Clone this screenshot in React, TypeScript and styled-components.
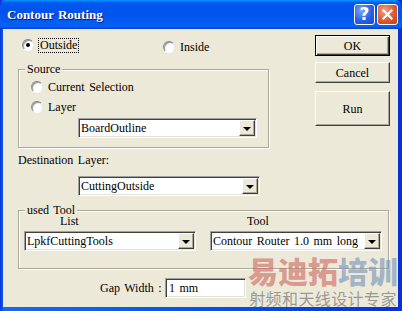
import styled, { createGlobalStyle } from "styled-components";

const Global = createGlobalStyle`
  html, body { margin: 0; padding: 0; background: #fff; }
  body { font-family: "Liberation Serif", serif; font-size: 12px; }
  * { box-sizing: border-box; }
`

const Window = styled.div`
  position: relative;
  width: 402px;
  height: 311px;
  display: flex;
  flex-direction: column;
  background: linear-gradient(to right, #0831d9 0%, #166aee 1%, #0055ea 50%, #0831d9 100%);
  font-family: "Liberation Serif", serif;
  font-size: 12px;
  word-spacing: 1.5px;
  color: #000;
  overflow: hidden;
`
const TitleBar = styled.div`
  height: 29px;
  display: flex;
  align-items: center;
  padding: 0 4px 0 7px;
  background: linear-gradient(to bottom, #0a97ff 0%, #0058ee 10%, #0052ea 45%, #0460f5 85%, #0a5ff0 92%, #003dd7 100%);
  border-radius: 7px 7px 0 0;
`
const Title = styled.div`
  flex: 1;
  color: #fff;
  font-weight: bold;
  font-size: 13px;
  word-spacing: 1px;
  text-shadow: 1px 1px #0a1883;
  padding-top: 1px;
`
const CapButton = styled.div<{ $close?: boolean }>`
  width: 21px;
  height: 21px;
  margin-left: 2px;
  border: 1px solid #fff;
  border-radius: 3px;
  display: flex;
  align-items: center;
  justify-content: center;
  background: ${p => p.$close
    ? "radial-gradient(circle at 35% 30%, #f2a07e 0%, #e0582c 55%, #c43c18 100%)"
    : "radial-gradient(circle at 35% 30%, #7ea6f8 0%, #2a62e6 55%, #1c46c8 100%)"};
  color: #fff;
  font-family: "DejaVu Sans", sans-serif;
  font-weight: bold;
  font-size: 17px;
  line-height: 1;
`
const Body = styled.div`
  position: relative;
  flex: 1;
  margin: 0 4px 4px 3px;
  background: #ece9d8;
  padding: 6px 9px 0 15px;
  display: flex;
  flex-direction: column;
`
const TopRow = styled.div`
  display: flex;
  justify-content: space-between;
`
const LeftCol = styled.div`
  width: 251px;
  display: flex;
  flex-direction: column;
`
const ModeRow = styled.div`
  height: 34px;
  display: grid;
  grid-template-columns: 145px 1fr;
  align-items: start;
  padding-top: 2px;
`
const RadioLabel = styled.div<{ $offset?: number; $left?: number }>`
  display: flex;
  align-items: center;
  gap: 5px;
  height: 16px;
  margin-top: ${p => p.$offset || 0}px;
  margin-left: ${p => p.$left || 0}px;
`
const RadioDot = styled.span<{ $on?: boolean }>`
  width: 12px;
  height: 12px;
  flex: none;
  border-radius: 50%;
  border: 1px solid;
  border-color: #808080 #e8e8e8 #ffffff #909090;
  background: radial-gradient(circle at 60% 65%, #ffffff 0%, #ffffff 45%, #dcdad0 100%);
  box-shadow: inset 1px 1px 0 #9a9a9a;
  display: flex;
  align-items: center;
  justify-content: center;
  &::after {
    content: "";
    width: 4px;
    height: 4px;
    border-radius: 50%;
    background: #000;
    display: ${p => (p.$on ? "block" : "none")};
  }
`
const Focus = styled.span`
  border: 1px dotted #000;
  margin-left: -1px;
  padding: 0 1px;
  line-height: 13px;
`
const Group = styled.div<{ $h: number }>`
  position: relative;
  height: ${p => p.$h}px;
  border: 1px solid #aca899;
  box-shadow: inset 1px 1px 0 #fff, 1px 1px 0 #fff;
`
const Legend = styled.span`
  position: absolute;
  top: -7px;
  left: 6px;
  padding: 0 2px;
  background: #ece9d8;
  line-height: 12px;
`
const SourceInner = styled.div`
  display: flex;
  flex-direction: column;
  padding: 9px 0 0 12px;
`
const ComboBox = styled.div<{ $w: number }>`
  width: ${p => p.$w}px;
  height: 20px;
  display: flex;
  align-items: center;
  background: #fff;
  border: 1px solid;
  border-color: #a0a0a0 #ffffff #ffffff #a0a0a0;
  box-shadow: inset 1px 1px 0 #404040, inset -1px -1px 0 #e4e2d8;
  padding: 1px 1px 1px 2px;
`
const ComboText = styled.span`
  flex: 1;
  white-space: nowrap;
  overflow: hidden;
`
const DropBtn = styled.span`
  width: 16px;
  height: 16px;
  flex: none;
  background: #ece9d8;
  border: 1px solid;
  border-color: #fff #404040 #404040 #fff;
  box-shadow: inset -1px -1px 0 #aca899;
  display: flex;
  align-items: center;
  justify-content: center;
  &::after {
    content: "";
    border-left: 4px solid transparent;
    border-right: 4px solid transparent;
    border-top: 4px solid #000;
    margin-top: 1px;
  }
`
const ButtonCol = styled.div`
  width: 75px;
  margin-right: -1px;
  display: flex;
  flex-direction: column;
`
const PushButton = styled.div<{ $h: number; $gap: number; $default?: boolean }>`
  height: ${p => p.$h}px;
  margin-top: ${p => p.$gap}px;
  display: flex;
  align-items: center;
  justify-content: center;
  background: #ece9d8;
  border: 1px solid;
  border-color: ${p => (p.$default ? "#000" : "#fff #404040 #404040 #fff")};
  box-shadow: ${p => (p.$default
    ? "inset 1px 1px 0 #fff, inset -1px -1px 0 #404040, inset -2px -2px 0 #aca899"
    : "inset -1px -1px 0 #aca899")};
  padding-top: 1px;
`
const FieldLabel = styled.div`
  margin-top: 4px;
  line-height: 16px;
`
const Indent = styled.div<{ $x: number; $top: number }>`
  margin: ${p => p.$top}px 0 0 ${p => p.$x}px;
`
const ToolGrid = styled.div`
  display: grid;
  grid-template-columns: 172px 172px;
  column-gap: 14px;
  padding: 4px 0 0 5px;
`
const ColHead = styled.div<{ $x: number }>`
  padding-left: ${p => p.$x}px;
  line-height: 12px;
  margin-bottom: 4px;
`
const GapRow = styled.div`
  display: flex;
  align-items: center;
  margin: 9px 0 0 82px;
`
const GapLabel = styled.span`
  width: 65px;
`
const TextInput = styled.div`
  width: 81px;
  height: 20px;
  background: #fff;
  border: 1px solid;
  border-color: #a0a0a0 #ffffff #ffffff #a0a0a0;
  box-shadow: inset 1px 1px 0 #404040, inset -1px -1px 0 #e4e2d8;
  padding: 2px 3px;
  line-height: 14px;
`
const Watermark = styled.div`
  position: absolute;
  left: 247px;
  top: 252px;
  width: 152px;
  display: flex;
  flex-direction: column;
  align-items: center;
  font-family: "Noto Sans CJK SC", sans-serif;
  word-spacing: 0;
  pointer-events: none;
`
const MarkBig = styled.div`
  font-size: 30px;
  font-weight: 900;
  line-height: 36px;
  white-space: nowrap;
`
const MarkRed = styled.span`
  color: rgba(205, 100, 95, 0.62);
`
const MarkBlue = styled.span`
  color: rgba(115, 145, 185, 0.62);
`
const MarkSmall = styled.div`
  font-size: 16px;
  line-height: 20px;
  color: rgba(125, 125, 125, 0.75);
  white-space: nowrap;
  letter-spacing: 0.4px;
`

function Radio({ label, on, focus, offset, left }: { label: string; on?: boolean; focus?: boolean; offset?: number; left?: number }) {
  return (
    <RadioLabel $offset={offset} $left={left}>
      <RadioDot $on={on} />
      {focus ? <Focus>{label}</Focus> : <span>{label}</span>}
    </RadioLabel>
  );
}

function Combo({ value, width }: { value: string; width: number }) {
  return (
    <ComboBox $w={width}>
      <ComboText>{value}</ComboText>
      <DropBtn />
    </ComboBox>
  );
}

export default function App() {
  return (
    <Window>
      <Global />
      <TitleBar>
        <Title>Contour Routing</Title>
        <CapButton>?</CapButton>
        <CapButton $close>
          <svg width="11" height="11" viewBox="0 0 11 11">
            <path d="M1.5 1.5 L9.5 9.5 M9.5 1.5 L1.5 9.5" stroke="#fff" strokeWidth="2.2" strokeLinecap="square" />
          </svg>
        </CapButton>
      </TitleBar>
      <Body>
        <TopRow>
          <LeftCol>
            <ModeRow>
              <Radio label="Outside" on focus left={4} />
              <Radio label="Inside" offset={2} />
            </ModeRow>
            <Group $h={79}>
              <Legend>Source</Legend>
              <SourceInner>
                <Radio label="Current Selection" />
                <Radio label="Layer" offset={4} />
                <Indent $x={47} $top={3}>
                  <Combo value="BoardOutline" width={179} />
                </Indent>
              </SourceInner>
            </Group>
          </LeftCol>
          <ButtonCol>
            <PushButton $h={21} $gap={0} $default>OK</PushButton>
            <PushButton $h={21} $gap={6}>Cancel</PushButton>
            <PushButton $h={35} $gap={8}>Run</PushButton>
          </ButtonCol>
        </TopRow>
        <FieldLabel>Destination Layer:</FieldLabel>
        <Indent $x={60} $top={8}>
          <Combo value="CuttingOutside" width={182} />
        </Indent>
        <Indent $x={0} $top={14}>
          <Group $h={59}>
            <Legend>used Tool</Legend>
            <ToolGrid>
              <ColHead $x={36}>List</ColHead>
              <ColHead $x={37}>Tool</ColHead>
              <Combo value="LpkfCuttingTools" width={172} />
              <Combo value="Contour Router 1.0 mm long" width={172} />
            </ToolGrid>
          </Group>
        </Indent>
        <GapRow>
          <GapLabel>Gap Width :</GapLabel>
          <TextInput>1 mm</TextInput>
        </GapRow>
      </Body>
      <Watermark>
        <MarkBig>
          <MarkRed>易迪拓</MarkRed>
          <MarkBlue>培训</MarkBlue>
        </MarkBig>
        <MarkSmall>射频和天线设计专家</MarkSmall>
      </Watermark>
    </Window>
  );
}
